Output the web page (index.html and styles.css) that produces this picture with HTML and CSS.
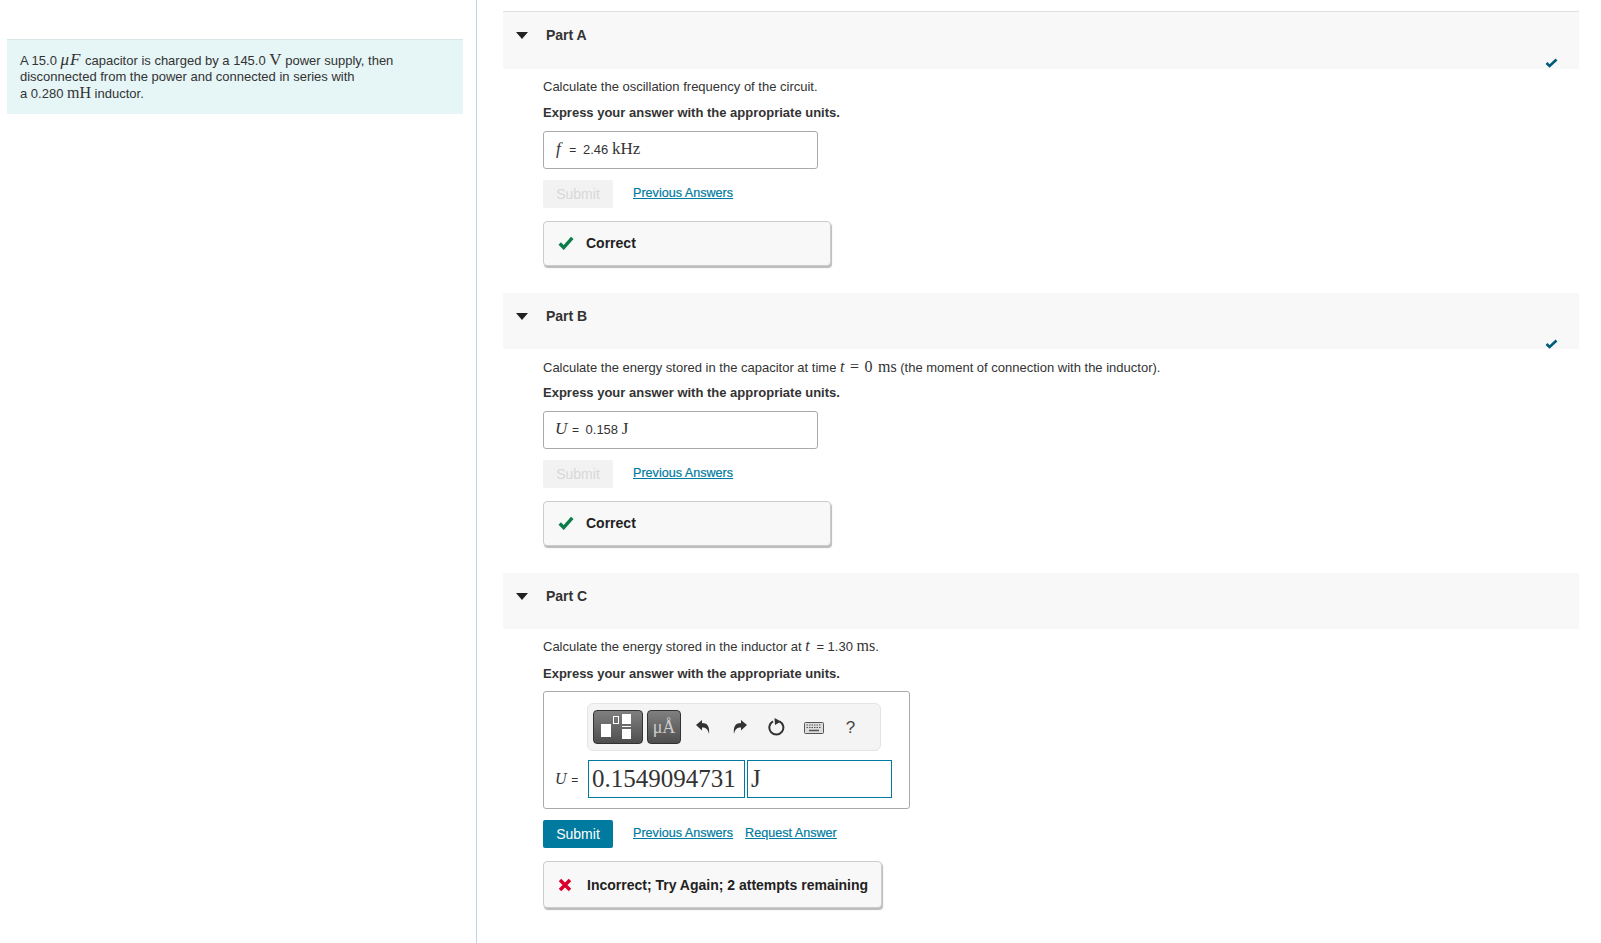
FILE: index.html
```html
<!DOCTYPE html>
<html lang="en">
<head>
    <meta charset="UTF-8">
    <title>Parts A to C</title>
    <link rel="stylesheet" href="styles.css">
</head>
<body>
    <div class="page">
        <div class="left">
            <div class="intro">
                A 15.0 <span class="math mu"><i>μF</i></span> capacitor is charged by a 145.0 <span class="math big">V</span> power supply, then<br>
                disconnected from the power and connected in series with<br>
                a 0.280 <span class="math">mH</span> inductor.
            </div>
        </div>

        <div class="right">
            <div class="part">
                <div class="part-head first">
                    <svg class="caret" width="12" height="7" viewBox="0 0 12 7"><path d="M0 0H12L6 7Z"/></svg>
                    <span class="part-title">Part A</span>
                    <svg class="done" width="13" height="10" viewBox="0 0 13 10"><path d="M1.5 5 L4.6 8 L11.5 1.5" /></svg>
                </div>
                <div class="part-body">
                    <p class="question">Calculate the oscillation frequency of the circuit.</p>
                    <p class="express">Express your answer with the appropriate units.</p>
                    <div class="answer"><span class="math var thin">f</span> <span class="eq">=</span> <span class="val">2.46</span> <span class="math">kHz</span></div>
                    <div class="actions">
                        <span class="submit off">Submit</span>
                        <a class="link" href="#">Previous Answers</a>
                    </div>
                    <div class="feedback ok">
                        <svg class="ok-mark" width="16" height="14" viewBox="0 0 14 12"><path d="M1.5 6.5 L5 10 L12.5 1.5"/></svg>
                        <span>Correct</span>
                    </div>
                </div>
            </div>

            <div class="part">
                <div class="part-head">
                    <svg class="caret" width="12" height="7" viewBox="0 0 12 7"><path d="M0 0H12L6 7Z"/></svg>
                    <span class="part-title">Part B</span>
                    <svg class="done" width="13" height="10" viewBox="0 0 13 10"><path d="M1.5 5 L4.6 8 L11.5 1.5" /></svg>
                </div>
                <div class="part-body">
                    <p class="question part-b">Calculate the energy stored in the capacitor at time <span class="math spaced"><i>t</i> = 0 ms</span> (the moment of connection with the inductor).</p>
                    <p class="express part-b">Express your answer with the appropriate units.</p>
                    <div class="answer"><span class="math var">U</span> <span class="eq">=</span> <span class="val">0.158</span> <span class="math">J</span></div>
                    <div class="actions">
                        <span class="submit off">Submit</span>
                        <a class="link" href="#">Previous Answers</a>
                    </div>
                    <div class="feedback ok">
                        <svg class="ok-mark" width="16" height="14" viewBox="0 0 14 12"><path d="M1.5 6.5 L5 10 L12.5 1.5"/></svg>
                        <span>Correct</span>
                    </div>
                </div>
            </div>

            <div class="part">
                <div class="part-head">
                    <svg class="caret" width="12" height="7" viewBox="0 0 12 7"><path d="M0 0H12L6 7Z"/></svg>
                    <span class="part-title">Part C</span>
                </div>
                <div class="part-body">
                    <p class="question">Calculate the energy stored in the inductor at <span class="math time"><i>t</i></span> = 1.30 <span class="math">ms</span>.</p>
                    <p class="express part-c">Express your answer with the appropriate units.</p>
                    <div class="editor">
                        <div class="toolbar">
                            <button class="tool-btn wide">
                                <svg width="48" height="32" viewBox="0 0 48 32">
                                    <rect x="7" y="13" width="10" height="13" fill="#fff"/>
                                    <rect x="19.5" y="5.5" width="5" height="7" fill="none" stroke="#fff"/>
                                    <rect x="28" y="3" width="9" height="10" fill="#fff"/>
                                    <rect x="28" y="15" width="9" height="1" fill="#fff"/>
                                    <rect x="28" y="18" width="9" height="10" fill="#fff"/>
                                </svg>
                            </button>
                            <button class="tool-btn unit">μÅ</button>
                            <span class="tool">
                                <svg width="16" height="16" viewBox="0 0 16 16"><path d="M1 6 L7 1 V4 C12 4 15 7 14 15 C13 10 11 8.500 7 8.500 V11.500 Z" fill="#333"/></svg>
                            </span>
                            <span class="tool">
                                <svg width="16" height="16" viewBox="0 0 16 16"><path d="M15 6 L9 1 V4 C4 4 1 7 2 15 C3 10 5 8.500 9 8.500 V11.500 Z" fill="#333"/></svg>
                            </span>
                            <span class="tool">
                                <svg width="18" height="18" viewBox="0 0 18 18"><path d="M11.500 3.300 A7 7 0 1 1 5 3.400" fill="none" stroke="#333" stroke-width="2"/><path d="M6.500 0 L13 3.400 L7 7 Z" fill="#333"/></svg>
                            </span>
                            <span class="tool keys">
                                <svg width="20" height="12" viewBox="0 0 20 12"><rect x="0.500" y="0.500" width="19" height="11" rx="1" fill="#ddd" stroke="#555"/><path d="M2.500 3H17.500M2.500 5.500H17.500" stroke="#555" stroke-dasharray="1.500 1"/><path d="M5 8.500H15" stroke="#555" stroke-width="1.500"/></svg>
                            </span>
                            <span class="tool help">?</span>
                        </div>
                        <div class="entry">
                            <span class="entry-label"><span class="math var">U</span> <span class="eq">=</span></span>
                            <span class="box value">0.1549094731</span>
                            <span class="box units">J</span>
                        </div>
                    </div>
                    <div class="actions tight">
                        <span class="submit">Submit</span>
                        <a class="link" href="#">Previous Answers</a>
                        <a class="link second" href="#">Request Answer</a>
                    </div>
                    <div class="feedback bad">
                        <svg class="bad-mark" width="14" height="14" viewBox="0 0 14 14"><path d="M2 2 L12 12 M12 2 L2 12"/></svg>
                        <span>Incorrect; Try Again; 2 attempts remaining</span>
                    </div>
                </div>
            </div>
        </div>
    </div>
</body>
</html>
```
FILE: styles.css
```css
body {
    margin: 0;
    font-family: 'Liberation Sans', Arial, sans-serif;
    font-size: 13px;
    color: #333;
    background: white;
}
p {
    margin: 0;
}
.page {
    display: flex;
    height: 943px;
    overflow: hidden;
}
.left {
    flex: none;
    width: 456px;
    height: 943px;
    padding: 39px 13px 0 7px;
    border-right: 1px solid #c5d3e0;
}
.intro {
    height: 75px;
    box-sizing: border-box;
    padding: 11px 13px 0 13px;
    background: #e6f5f6;
    border-top: 1px solid #d8e6e8;
    line-height: 16px;
}
.math {
    font-family: 'Liberation Serif', 'Times New Roman', serif;
    font-size: 16px;
    line-height: 1;
}
.math.big {
    font-size: 17px;
}
.math.mu {
    font-size: 17px;
    letter-spacing: 1px;
}
.math.spaced {
    word-spacing: 1.5px;
}
.math.time {
    margin-right: 3px;
}
.right {
    flex: 1;
    padding: 11px 22px 0 26px;
    min-width: 0;
}
.part {
    margin-bottom: 27px;
}
.part-head {
    display: flex;
    height: 56px;
    padding-left: 13px;
    background: #f8f8f8;
}
.part-head.first {
    border-top: 1px solid #e0e0e0;
    height: 57px;
}
.caret {
    margin-top: 20px;
    fill: #222;
}
.part-title {
    margin-left: 18px;
    margin-top: 13px;
    line-height: 20px;
    font-size: 14px;
    font-weight: bold;
}
.done {
    margin-left: auto;
    margin-right: 21px;
    margin-top: 46px;
    fill: none;
    stroke: #005a7a;
    stroke-width: 2.6;
}
.part-body {
    padding-left: 40px;
}
.question {
    margin-top: 8px;
    line-height: 20px;
}
.question.part-b {
    margin-top: 9px;
}
.express {
    margin-top: 6px;
    line-height: 20px;
    font-weight: bold;
}
.express.part-b {
    margin-top: 5px;
}
.express.part-c {
    margin-top: 7px;
    margin-bottom: -1px;
}
.answer {
    margin-top: 8px;
    width: 275px;
    height: 38px;
    box-sizing: border-box;
    padding-left: 11px;
    border: 1px solid #aaa;
    border-radius: 3px;
    line-height: 36px;
}
.answer .math {
    font-size: 17px;
}
.var {
    font-style: italic;
}
.var.thin {
    margin: 0 4px 0 1px;
}
.eq {
    margin: 0 3px 0 1px;
    font-size: 12px;
}
.actions {
    display: flex;
    align-items: flex-start;
    margin-top: 11px;
    height: 28px;
}
.submit {
    width: 70px;
    height: 28px;
    line-height: 28px;
    text-align: center;
    font-size: 14px;
    background: #007a9e;
    color: white;
    border-radius: 2px;
}
.submit.off {
    background: #f2f2f2;
    color: #d8d8d8;
}
.link {
    margin-left: 20px;
    line-height: 26px;
    color: #007a9e;
    font-size: 12.6px;
    -webkit-text-stroke: 0.2px #007a9e;
}
.link.second {
    margin-left: 12px;
}
.feedback {
    display: flex;
    align-items: center;
    margin-top: 13px;
    height: 45px;
    box-sizing: border-box;
    width: 288px;
    padding-left: 14px;
    border: 1px solid #ccc;
    border-radius: 4px;
    background: #f8f8f8;
    box-shadow: 1px 2px 1px #bbb;
    font-size: 14px;
    font-weight: bold;
    color: #222;
}
.feedback.ok {
    padding-bottom: 2px;
}
.ok-mark {
    margin-right: 12px;
    fill: none;
    stroke: #0a7d4a;
    stroke-width: 3;
}
.feedback.bad {
    width: 339px;
    height: 47px;
}
.bad-mark {
    margin-right: 15px;
    fill: none;
    stroke: #d9002c;
    stroke-width: 3.5;
}
.editor {
    margin-top: 8px;
    width: 367px;
    height: 118px;
    box-sizing: border-box;
    padding: 11px 0 0 11px;
    border: 1px solid #aaa;
    border-radius: 3px;
}
.toolbar {
    display: flex;
    align-items: center;
    margin-left: 32px;
    width: 294px;
    height: 48px;
    box-sizing: border-box;
    padding-left: 5px;
    background: #f4f4f4;
    border: 1px solid #e4e4e4;
    border-radius: 6px;
}
.tool-btn {
    height: 34px;
    padding: 0;
    border: 1px solid #333;
    border-radius: 4px;
    background: linear-gradient(#808080, #4e4e4e);
}
.tool-btn.wide {
    width: 50px;
}
.tool-btn.unit {
    width: 34px;
    margin-left: 4px;
    margin-right: 3px;
    font-family: 'Liberation Serif', serif;
    font-size: 18px;
    color: #ccc;
}
.tool {
    display: flex;
    justify-content: center;
    align-items: center;
    width: 37px;
    height: 34px;
}
.tool.keys {
    padding-top: 2px;
    box-sizing: border-box;
}
.tool.help {
    font-size: 17px;
    color: #444;
    padding-top: 1px;
    box-sizing: border-box;
}
.entry {
    display: flex;
    align-items: center;
    margin-top: 9px;
}
.entry-label {
    width: 33px;
    flex: none;
}
.box {
    display: block;
    height: 38px;
    box-sizing: border-box;
    border: 1px solid #007a9e;
    font-family: 'Liberation Serif', serif;
    font-size: 25px;
    line-height: 36px;
    padding-left: 3px;
    color: #333;
}
.box.value {
    width: 157px;
}
.box.units {
    width: 145px;
    margin-left: 2px;
}
.actions.tight {
    margin-top: 11px;
}
```
